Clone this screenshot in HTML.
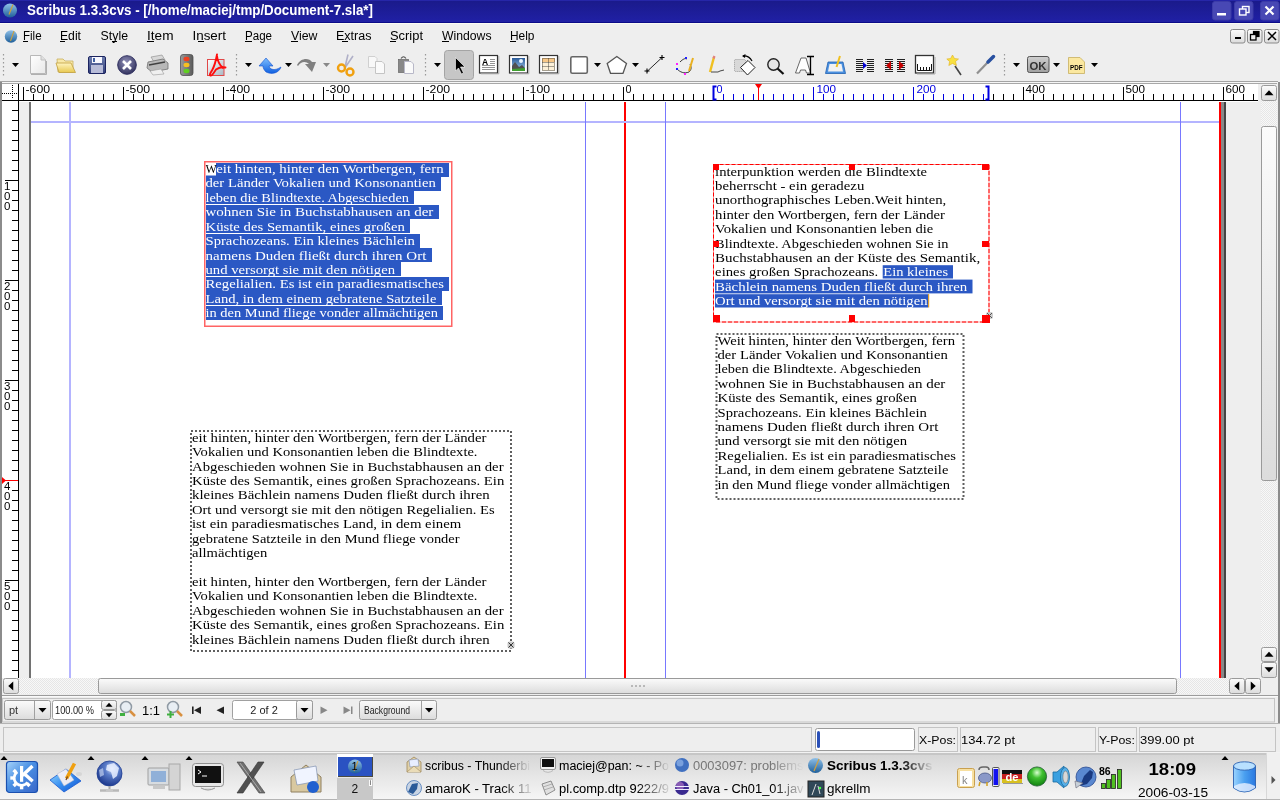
<!DOCTYPE html><html><head><meta charset="utf-8"><title>Scribus</title><style>html,body{margin:0;padding:0;width:1280px;height:800px;overflow:hidden;background:#eee;font-family:"Liberation Sans",sans-serif}svg{display:block;will-change:transform}text{white-space:pre}</style></head><body><svg width="1280" height="800" viewBox="0 0 1280 800"><defs>
<linearGradient id="gTitle" x1="0" y1="0" x2="0" y2="1"><stop offset="0" stop-color="#1a1a8a"/><stop offset="1" stop-color="#2020a6"/></linearGradient>
<linearGradient id="gBtn" x1="0" y1="0" x2="0" y2="1"><stop offset="0" stop-color="#fbfbfb"/><stop offset="1" stop-color="#dcdcdc"/></linearGradient>
<linearGradient id="gTask" x1="0" y1="0" x2="0" y2="1"><stop offset="0" stop-color="#d4d4d4"/><stop offset="0.5" stop-color="#e6e6e6"/><stop offset="1" stop-color="#f6f6f6"/></linearGradient>
<pattern id="chk" width="2" height="2" patternUnits="userSpaceOnUse"><rect width="2" height="2" fill="#f8f8f8"/><rect width="1" height="1" fill="#e6e6e6"/><rect x="1" y="1" width="1" height="1" fill="#e6e6e6"/></pattern>
<linearGradient id="gBall" x1="0" y1="0" x2="0" y2="1"><stop offset="0" stop-color="#8fc0e8"/><stop offset="1" stop-color="#1f5f9a"/></linearGradient>
</defs>
<rect x="0" y="0" width="1280" height="800" fill="#eeeeee" />
<rect x="0" y="0" width="1280" height="23" fill="url(#gTitle)" />
<rect x="0" y="0" width="1280" height="1" fill="#2626a8" />
<rect x="0" y="22" width="1280" height="1" fill="#0c0c88" />
<rect x="0" y="23" width="1280" height="1" fill="#fafaf2" />
<text x="27" y="15.3" font-family="Liberation Sans" font-size="14" font-weight="700" fill="#ffffff" textLength="346" lengthAdjust="spacingAndGlyphs" >Scribus 1.3.3cvs - [/home/maciej/tmp/Document-7.sla*]</text>
<rect x="1212.5" y="1.5" width="18.5" height="18.5" rx="2.5" fill="#4848b4" stroke="#3c3ca8"/>
<rect x="1234.5" y="1.5" width="18.5" height="18.5" rx="2.5" fill="#4848b4" stroke="#3c3ca8"/>
<rect x="1260.5" y="1.5" width="18.5" height="18.5" rx="2.5" fill="#4848b4" stroke="#3c3ca8"/>
<rect x="1217" y="13" width="9" height="2.5" fill="#fff" />
<rect x="1242.5" y="6.5" width="6.5" height="6" fill="none" stroke="#fff" stroke-width="1.4"/>
<rect x="1239.5" y="9" width="6.5" height="6" fill="#4848b4" stroke="#fff" stroke-width="1.4"/>
<path d="M1265.5 6.5 L1273.5 14.5 M1273.5 6.5 L1265.5 14.5" stroke="#fff" stroke-width="2.2"/>
<circle cx="10" cy="10.5" r="7" fill="url(#gBall)"/><path d="M13 4.5 L9 14.5" stroke="#c8a040" stroke-width="1.2"/>
<circle cx="11" cy="36.5" r="6.2" fill="url(#gBall)"/><path d="M14 31 L10.5 41" stroke="#c8a040" stroke-width="1.1"/>
<text x="23" y="39.8" font-family="Liberation Sans" font-size="12.3" font-weight="400" fill="#000" textLength="18.6" lengthAdjust="spacingAndGlyphs" >File</text>
<rect x="23" y="41" width="5" height="1" fill="#000" />
<text x="60" y="39.8" font-family="Liberation Sans" font-size="12.3" font-weight="400" fill="#000" textLength="21" lengthAdjust="spacingAndGlyphs" >Edit</text>
<rect x="60" y="41" width="5" height="1" fill="#000" />
<text x="100.6" y="39.8" font-family="Liberation Sans" font-size="12.3" font-weight="400" fill="#000" textLength="27.4" lengthAdjust="spacingAndGlyphs" >Style</text>
<rect x="112" y="41" width="5" height="1" fill="#000" />
<text x="147" y="39.8" font-family="Liberation Sans" font-size="12.3" font-weight="400" fill="#000" textLength="26.5" lengthAdjust="spacingAndGlyphs" >Item</text>
<rect x="147" y="41" width="7" height="1" fill="#000" />
<text x="192.5" y="39.8" font-family="Liberation Sans" font-size="12.3" font-weight="400" fill="#000" textLength="33.5" lengthAdjust="spacingAndGlyphs" >Insert</text>
<rect x="198" y="41" width="6" height="1" fill="#000" />
<text x="245" y="39.8" font-family="Liberation Sans" font-size="12.3" font-weight="400" fill="#000" textLength="27" lengthAdjust="spacingAndGlyphs" >Page</text>
<rect x="245" y="41" width="7" height="1" fill="#000" />
<text x="291" y="39.8" font-family="Liberation Sans" font-size="12.3" font-weight="400" fill="#000" textLength="26.5" lengthAdjust="spacingAndGlyphs" >View</text>
<rect x="291" y="41" width="7" height="1" fill="#000" />
<text x="336" y="39.8" font-family="Liberation Sans" font-size="12.3" font-weight="400" fill="#000" textLength="35.5" lengthAdjust="spacingAndGlyphs" >Extras</text>
<rect x="342" y="41" width="6" height="1" fill="#000" />
<text x="390" y="39.8" font-family="Liberation Sans" font-size="12.3" font-weight="400" fill="#000" textLength="33" lengthAdjust="spacingAndGlyphs" >Script</text>
<rect x="390" y="41" width="6" height="1" fill="#000" />
<text x="442" y="39.8" font-family="Liberation Sans" font-size="12.3" font-weight="400" fill="#000" textLength="49.5" lengthAdjust="spacingAndGlyphs" >Windows</text>
<rect x="442" y="41" width="7" height="1" fill="#000" />
<text x="510" y="39.8" font-family="Liberation Sans" font-size="12.3" font-weight="400" fill="#000" textLength="24.5" lengthAdjust="spacingAndGlyphs" >Help</text>
<rect x="510" y="41" width="6" height="1" fill="#000" />
<rect x="1230.5" y="29.5" width="14.5" height="13.5" rx="2" fill="url(#gBtn)" stroke="#8a8a8a"/>
<rect x="1247.5" y="29.5" width="14.5" height="13.5" rx="2" fill="url(#gBtn)" stroke="#8a8a8a"/>
<rect x="1264.5" y="29.5" width="14.5" height="13.5" rx="2" fill="url(#gBtn)" stroke="#8a8a8a"/>
<rect x="1235" y="37" width="6" height="2" fill="#000" />
<rect x="1253.5" y="31.5" width="5.5" height="5" fill="#000" stroke="#000" stroke-width="1.2"/><rect x="1250.5" y="34.5" width="5.5" height="5.5" fill="#f0f0f0" stroke="#000" stroke-width="1.3"/>
<path d="M1268 32 L1276 40 M1276 32 L1268 40" stroke="#000" stroke-width="1.5"/>
<rect x="0" y="81" width="1278" height="1" fill="#a4a4a4" />
<rect x="0" y="82" width="1280" height="1" fill="#f6f6f6" />
<rect x="2" y="83" width="1275" height="1" fill="#a8a8a8" />
<defs>
<linearGradient id="gDoc" x1="0" y1="0" x2="1" y2="1"><stop offset="0" stop-color="#ffffff"/><stop offset="1" stop-color="#e8e8e8"/></linearGradient>
<linearGradient id="gFold" x1="0" y1="0" x2="0" y2="1"><stop offset="0" stop-color="#fff4c0"/><stop offset="1" stop-color="#e8c850"/></linearGradient>
<linearGradient id="gSave" x1="0" y1="0" x2="0" y2="1"><stop offset="0" stop-color="#7080b0"/><stop offset="1" stop-color="#303c78"/></linearGradient>
<radialGradient id="gClose" cx="0.45" cy="0.35" r="0.7"><stop offset="0" stop-color="#9090b8"/><stop offset="1" stop-color="#2c2c58"/></radialGradient>
<linearGradient id="gTL" x1="0" y1="0" x2="1" y2="0"><stop offset="0" stop-color="#9a9a9a"/><stop offset="0.5" stop-color="#7a7a7a"/><stop offset="1" stop-color="#5a5a5a"/></linearGradient>
<linearGradient id="gBlue" x1="0" y1="0" x2="0" y2="1"><stop offset="0" stop-color="#80c0ff"/><stop offset="1" stop-color="#1060e0"/></linearGradient>
<linearGradient id="gSky" x1="0" y1="0" x2="0" y2="1"><stop offset="0" stop-color="#2a5a98"/><stop offset="1" stop-color="#a8d0f0"/></linearGradient>
<linearGradient id="gOK" x1="0" y1="0" x2="0" y2="1"><stop offset="0" stop-color="#d0d0d0"/><stop offset="1" stop-color="#a0a0a0"/></linearGradient>
</defs>
<path d="M3.5 54 V77" stroke="#999" stroke-width="1.2" stroke-dasharray="1.5 2.5"/>
<path d="M12 63 H19 L15.5 67 Z" fill="#000"/>
<path d="M30.5 55.5 H41 L45.5 60 V73.5 H30.5 Z" fill="url(#gDoc)" stroke="#b8b8b8"/><path d="M41 55.5 V60 H45.5" fill="#e0e0e0" stroke="#c0c0c0"/><path d="M31 74.5 H46.5 V61" stroke="#b0b0b0" fill="none"/>
<path d="M57 59 H63 L65 61 H73 V72 H58 Z" fill="#f8e8a8" stroke="#c8b060" stroke-width="0.8"/><path d="M56 63 H71 L75.5 72.5 H59 Z" fill="url(#gFold)" stroke="#c0a040" stroke-width="0.8"/>
<rect x="88.5" y="56.5" width="17" height="17" rx="1.5" fill="url(#gSave)" stroke="#1c2460"/><rect x="92" y="57" width="10" height="6" fill="#f8f8ff"/><rect x="91" y="65" width="12" height="8" fill="#b8bcd8"/><rect x="93" y="58" width="2" height="4" fill="#4060a0"/>
<circle cx="127" cy="65" r="9.3" fill="url(#gClose)" stroke="#303060"/><path d="M123 61 L131 69 M131 61 L123 69" stroke="#fff" stroke-width="2.6"/>
<path d="M151 57 L162 55 L165 60 L154 62 Z" fill="#d8d8d8" stroke="#888" stroke-width="0.6"/><path d="M148 62 L163 59 L168 63 L168 69 L152 72 L147 68 Z" fill="#b8b8b8" stroke="#707070" stroke-width="0.8"/><path d="M149 65 L165 62" stroke="#404040" stroke-width="1.5"/><path d="M150 71 L161 69 L164 74 L153 75 Z" fill="#f0f0f0" stroke="#999" stroke-width="0.6"/>
<rect x="180.5" y="54.5" width="12.5" height="21" rx="2.5" fill="url(#gTL)" stroke="#505050" stroke-width="0.8"/><ellipse cx="186.5" cy="59" rx="3" ry="2.2" fill="#f04020"/><ellipse cx="186.5" cy="65" rx="3" ry="2.2" fill="#f8c020"/><ellipse cx="186.5" cy="71" rx="3" ry="2.2" fill="#60d020"/>
<defs><linearGradient id="gPdf" x1="0" y1="0" x2="1" y2="1"><stop offset="0" stop-color="#ffffff"/><stop offset="1" stop-color="#a8b8c4"/></linearGradient></defs>
<rect x="207.5" y="59.5" width="16.5" height="16" fill="url(#gPdf)" stroke="#e04848"/>
<path d="M217 54.5 C216 60 215 65 212.5 69.5 C210.5 73 209 75 210.5 75.5 C212 76 214 72.5 216 69.5 C219 67.5 222.5 67 225.5 67.5 M217 56 C217.5 61 219.5 65 223 68" fill="none" stroke="#ff0c0c" stroke-width="1.9" stroke-linecap="round"/>
<path d="M236.5 54 V77" stroke="#999" stroke-width="1.2" stroke-dasharray="1.5 2.5"/>
<path d="M245 63 H252 L248.5 67 Z" fill="#000"/>
<path d="M259 66 L266 58 L273 66 L269 66 C270 70 275 71 281 67 C279 73 272 75 266 72 C264 70 263 68 263 66 Z" fill="url(#gBlue)" stroke="#1050d0" stroke-width="0.6"/>
<path d="M285 63 H292 L288.5 67 Z" fill="#000"/>
<path d="M297 65 C300 58 309 57 312 62 L316 62 L312 72 L305 64 L309 64 C306 61 301 61 298 66 Z" fill="#808080"/>
<path d="M323 63 H330 L326.5 67 Z" fill="#888"/>
<path d="M348 54.5 L345 67 M353 56 L345.5 67" stroke="#b0b0c8" stroke-width="1.6"/><circle cx="341.5" cy="68" r="3.5" fill="none" stroke="#f0a010" stroke-width="2.4"/><circle cx="350" cy="72" r="3.5" fill="none" stroke="#f0a010" stroke-width="2.4"/>
<path d="M368.5 56.5 H375 L377 58.5 V67.5 H368.5 Z" fill="#f8f8f8" stroke="#d0d0d0"/><path d="M375.5 61.5 H382 L384.5 64 V73.5 H375.5 Z" fill="#fafafa" stroke="#c4c4c4"/>
<rect x="398.5" y="59.5" width="10" height="13" fill="#888" stroke="#666" stroke-width="0.7"/><path d="M401 58.5 Q403.5 55 406 58.5" fill="none" stroke="#555" stroke-width="1.2"/><path d="M404.5 61.5 H411 L413.5 64 V73.5 H404.5 Z" fill="#fafafa" stroke="#b8b8c8"/>
<path d="M425.5 54 V77" stroke="#999" stroke-width="1.2" stroke-dasharray="1.5 2.5"/>
<path d="M434 63 H441 L437.5 67 Z" fill="#000"/>
<rect x="444.5" y="50.5" width="29" height="29" rx="3" fill="#c6c6c6" stroke="#a4a4a4"/>
<path d="M455.5 57.5 V71 L458.5 68 L461.5 74 L463.5 73 L460.5 67 L465 67 Z" fill="#000" stroke="#fff" stroke-width="0.6"/>
<rect x="479.5" y="55.5" width="18" height="17.5" fill="#fff" stroke="#333" stroke-width="1.2"/><path d="M481 73.8 H498.8 V56" stroke="#aaa" fill="none"/>
<text x="482" y="64.5" font-family="Liberation Sans" font-size="8.5" font-weight="700" fill="#000" >A</text>
<path d="M490 59.5 H495 M490 61.5 H495 M490 63.5 H495 M482 65.5 H495 M482 67.5 H495 M482 69.5 H495" stroke="#777" stroke-width="0.8"/>
<rect x="509.5" y="55.5" width="18" height="17.5" fill="#fff" stroke="#333" stroke-width="1.2"/><path d="M511 73.8 H528.8 V56" stroke="#aaa" fill="none"/>
<rect x="512" y="58" width="13" height="13" fill="url(#gSky)"/><path d="M512 71 V66 L515 62 L519 67 L522 65 L525 68 V71 Z" fill="#505050"/><path d="M512 71 V69 L525 68 V71 Z" fill="#40a030"/><circle cx="521" cy="61" r="2" fill="#e8f4ff"/>
<rect x="539.5" y="55.5" width="18" height="17.5" fill="#fff" stroke="#333" stroke-width="1.2"/><path d="M541 73.8 H558.8 V56" stroke="#aaa" fill="none"/>
<rect x="542" y="58" width="13" height="13" fill="#fcf0d8"/><rect x="542" y="58" width="13" height="4" fill="#f8c888"/><path d="M542.5 58.5 H554.5 V70.5 H542.5 Z M542.5 62.5 H554.5 M542.5 66.5 H554.5 M548.5 58.5 V70.5" fill="none" stroke="#222" stroke-width="0.8" stroke-dasharray="1 1"/>
<rect x="570.8" y="56.8" width="16.5" height="16.5" rx="1.5" fill="#fff" stroke="#666" stroke-width="1.6"/>
<path d="M594 63 H601 L597.5 67 Z" fill="#000"/>
<path d="M616.8 56.5 L626.5 63.5 L623 73.3 H610.5 L607.2 63.5 Z" fill="#fff" stroke="#555" stroke-width="1.3"/>
<path d="M632 63 H639 L635.5 67 Z" fill="#000"/>
<path d="M647 71.5 L662 57.5" stroke="#111" stroke-width="0.9"/><path d="M644.5 71 H649.5 M647 68.5 V73.5 M659.5 57.5 H664.5 M662 55 V60" stroke="#000" stroke-width="1.1"/>
<path d="M680 62 C683 59 685 58 687 59 M677 69 C680 72 684 74 689 72 C691 70 692 68 690 64" fill="none" stroke="#222" stroke-width="0.9"/><path d="M689 71 L693 58" stroke="#e8b020" stroke-width="2"/><rect x="676" y="63" width="2" height="2" fill="#ff20ff"/><rect x="676" y="68" width="2" height="2" fill="#2020ff"/><rect x="685" y="57" width="2" height="2" fill="#2020ff"/><rect x="684" y="73" width="2" height="2" fill="#ff20ff"/>
<path d="M710 72 L714 57" stroke="#f0c020" stroke-width="2.4"/><path d="M713.5 58.5 L714.5 56" stroke="#e08080" stroke-width="2.2"/><path d="M711 72 H718 L720 71 L724 70" fill="none" stroke="#333" stroke-width="0.9"/>
<rect x="734.5" y="59.5" width="11" height="12" rx="1" fill="#d8d8d8" stroke="#999" stroke-dasharray="1 1"/><path d="M748 60.5 L755 67.5 L747.5 75 L740.5 67.5 Z" fill="#fff" stroke="#222" stroke-width="1"/><path d="M743 56 Q749 55.5 752 61" fill="none" stroke="#000" stroke-width="1.2"/><path d="M742 56 L745.5 54 L745 58 Z" fill="#000"/>
<circle cx="773.5" cy="64.5" r="5.7" fill="#e4e4e4" stroke="#222" stroke-width="1.4"/><path d="M777.5 68.5 L783.5 74" stroke="#111" stroke-width="2.2"/>
<path d="M795.5 73 L801 58 H806 L810.5 73 H806.5 L805.5 70 H800.5 L799.5 73 Z" fill="#fff" stroke="#444" stroke-width="0.8"/><path d="M807 56.5 H814 M807 74.5 H814 M810.5 56.5 V74.5" stroke="#000" stroke-width="1.3"/>
<path d="M828 62 H843 L845.5 73.5 H825.5 Z" fill="#4a90e0" stroke="#2060b0" stroke-width="0.8"/><path d="M829.5 64 H841.5 L843 71.5 H828 Z" fill="#f2f2f2"/><path d="M836.5 67 L840 56" stroke="#f0c020" stroke-width="2"/>
<path d="M856 59.5 H863 M867 59.5 H874 M856 61.5 H863 M867 61.5 H874 M856 63.5 H863 M867 63.5 H874 M856 65.5 H863 M867 65.5 H874 M856 67.5 H863 M867 67.5 H874 M856 69.5 H863 M867 69.5 H874 M856 71.5 H863 M867 71.5 H874 " stroke="#222" stroke-width="1"/><path d="M863 62 L867 65.5 L863 69 Z" fill="#0000d0"/>
<path d="M885 59.5 H893 M897 59.5 H905 M885 61.5 H893 M897 61.5 H905 M885 63.5 H893 M897 63.5 H905 M885 65.5 H893 M897 65.5 H905 M885 67.5 H893 M897 67.5 H905 M885 69.5 H893 M897 69.5 H905 M885 71.5 H893 M897 71.5 H905 " stroke="#222" stroke-width="1"/><path d="M891 61 L886 65.5 L891 70 Z M899 61 L904 65.5 L899 70 Z" fill="#c80000"/>
<rect x="915.5" y="55.5" width="18" height="17.5" fill="#fff" stroke="#333" stroke-width="1.3"/><path d="M917 74 H935 V57" stroke="#aaa" fill="none"/><path d="M917.5 64 V70.5 H931.5 V64 M920.5 67 V70.5 M923.5 67 V70.5 M926.5 67 V70.5 M929.5 67 V70.5" fill="none" stroke="#111" stroke-width="1"/>
<path d="M955 66 L961 75" stroke="#444" stroke-width="1.6"/><path d="M952.5 55 L954.5 58.5 L958.5 59 L955.5 61.5 L956.5 65.5 L952.5 63.5 L948.8 65.5 L949.6 61.5 L946.8 59 L950.6 58.5 Z" fill="#f8e040" stroke="#e0b020" stroke-width="0.6"/>
<path d="M977 73.5 L989 61" stroke="#909090" stroke-width="2.2"/><path d="M988 62 L993.5 56.5" stroke="#2850a0" stroke-width="3.5" stroke-linecap="round"/>
<path d="M1004.5 54 V77" stroke="#999" stroke-width="1.2" stroke-dasharray="1.5 2.5"/>
<path d="M1013 63 H1020 L1016.5 67 Z" fill="#000"/>
<rect x="1027.5" y="56.5" width="21.5" height="16" rx="2" fill="url(#gOK)" stroke="#555" stroke-width="1"/>
<text x="1029.5" y="69.5" font-family="Liberation Sans" font-size="11.5" font-weight="700" fill="#333" textLength="17" lengthAdjust="spacingAndGlyphs" >OK</text>
<path d="M1053 63 H1060 L1056.5 67 Z" fill="#000"/>
<path d="M1068.5 57.5 H1080 L1084.5 62 V73.5 H1068.5 Z" fill="#fbe8a0" stroke="#c8b060" stroke-width="0.8"/>
<text x="1070" y="70" font-family="Liberation Sans" font-size="6.5" font-weight="700" fill="#000" textLength="12.5" lengthAdjust="spacingAndGlyphs" >PDF</text>
<path d="M1091 63 H1098 L1094.5 67 Z" fill="#000"/>
<rect x="0" y="82" width="2" height="613" fill="#8c8c8c" />
<rect x="2" y="84" width="16" height="16" fill="#ffffff" />
<path d="M2 93.5 H17 M12.5 85 V98" stroke="#000" stroke-width="1" stroke-dasharray="1 1"/>
<rect x="19" y="84" width="1239" height="16" fill="#ffffff" />
<rect x="18" y="84" width="1" height="594" fill="#000" />
<rect x="2" y="100" width="1256" height="1" fill="#000" />
<rect x="23" y="87" width="1" height="13" fill="#000"/><rect x="33" y="94" width="1" height="6" fill="#000"/><rect x="43" y="94" width="1" height="6" fill="#000"/><rect x="53" y="94" width="1" height="6" fill="#000"/><rect x="63" y="94" width="1" height="6" fill="#000"/><rect x="73" y="94" width="1" height="6" fill="#000"/><rect x="83" y="94" width="1" height="6" fill="#000"/><rect x="93" y="94" width="1" height="6" fill="#000"/><rect x="103" y="94" width="1" height="6" fill="#000"/><rect x="113" y="94" width="1" height="6" fill="#000"/><rect x="123" y="87" width="1" height="13" fill="#000"/><rect x="133" y="94" width="1" height="6" fill="#000"/><rect x="143" y="94" width="1" height="6" fill="#000"/><rect x="153" y="94" width="1" height="6" fill="#000"/><rect x="163" y="94" width="1" height="6" fill="#000"/><rect x="173" y="94" width="1" height="6" fill="#000"/><rect x="183" y="94" width="1" height="6" fill="#000"/><rect x="193" y="94" width="1" height="6" fill="#000"/><rect x="203" y="94" width="1" height="6" fill="#000"/><rect x="213" y="94" width="1" height="6" fill="#000"/><rect x="223" y="87" width="1" height="13" fill="#000"/><rect x="233" y="94" width="1" height="6" fill="#000"/><rect x="243" y="94" width="1" height="6" fill="#000"/><rect x="253" y="94" width="1" height="6" fill="#000"/><rect x="263" y="94" width="1" height="6" fill="#000"/><rect x="273" y="94" width="1" height="6" fill="#000"/><rect x="283" y="94" width="1" height="6" fill="#000"/><rect x="293" y="94" width="1" height="6" fill="#000"/><rect x="303" y="94" width="1" height="6" fill="#000"/><rect x="313" y="94" width="1" height="6" fill="#000"/><rect x="323" y="87" width="1" height="13" fill="#000"/><rect x="333" y="94" width="1" height="6" fill="#000"/><rect x="343" y="94" width="1" height="6" fill="#000"/><rect x="353" y="94" width="1" height="6" fill="#000"/><rect x="363" y="94" width="1" height="6" fill="#000"/><rect x="373" y="94" width="1" height="6" fill="#000"/><rect x="383" y="94" width="1" height="6" fill="#000"/><rect x="393" y="94" width="1" height="6" fill="#000"/><rect x="403" y="94" width="1" height="6" fill="#000"/><rect x="413" y="94" width="1" height="6" fill="#000"/><rect x="423" y="87" width="1" height="13" fill="#000"/><rect x="433" y="94" width="1" height="6" fill="#000"/><rect x="443" y="94" width="1" height="6" fill="#000"/><rect x="453" y="94" width="1" height="6" fill="#000"/><rect x="463" y="94" width="1" height="6" fill="#000"/><rect x="473" y="94" width="1" height="6" fill="#000"/><rect x="483" y="94" width="1" height="6" fill="#000"/><rect x="493" y="94" width="1" height="6" fill="#000"/><rect x="503" y="94" width="1" height="6" fill="#000"/><rect x="513" y="94" width="1" height="6" fill="#000"/><rect x="523" y="87" width="1" height="13" fill="#000"/><rect x="533" y="94" width="1" height="6" fill="#000"/><rect x="543" y="94" width="1" height="6" fill="#000"/><rect x="553" y="94" width="1" height="6" fill="#000"/><rect x="563" y="94" width="1" height="6" fill="#000"/><rect x="573" y="94" width="1" height="6" fill="#000"/><rect x="583" y="94" width="1" height="6" fill="#000"/><rect x="593" y="94" width="1" height="6" fill="#000"/><rect x="603" y="94" width="1" height="6" fill="#000"/><rect x="613" y="94" width="1" height="6" fill="#000"/><rect x="623" y="87" width="1" height="13" fill="#000"/><rect x="633" y="94" width="1" height="6" fill="#000"/><rect x="643" y="94" width="1" height="6" fill="#000"/><rect x="653" y="94" width="1" height="6" fill="#000"/><rect x="663" y="94" width="1" height="6" fill="#000"/><rect x="673" y="94" width="1" height="6" fill="#000"/><rect x="683" y="94" width="1" height="6" fill="#000"/><rect x="693" y="94" width="1" height="6" fill="#000"/><rect x="703" y="94" width="1" height="6" fill="#000"/><rect x="713" y="94" width="1" height="6" fill="#0000e0"/><rect x="723" y="94" width="1" height="6" fill="#0000e0"/><rect x="733" y="94" width="1" height="6" fill="#0000e0"/><rect x="743" y="94" width="1" height="6" fill="#0000e0"/><rect x="753" y="94" width="1" height="6" fill="#0000e0"/><rect x="763" y="94" width="1" height="6" fill="#0000e0"/><rect x="773" y="94" width="1" height="6" fill="#0000e0"/><rect x="783" y="94" width="1" height="6" fill="#0000e0"/><rect x="793" y="94" width="1" height="6" fill="#0000e0"/><rect x="803" y="94" width="1" height="6" fill="#0000e0"/><rect x="813" y="87" width="1" height="13" fill="#0000e0"/><rect x="823" y="94" width="1" height="6" fill="#0000e0"/><rect x="833" y="94" width="1" height="6" fill="#0000e0"/><rect x="843" y="94" width="1" height="6" fill="#0000e0"/><rect x="853" y="94" width="1" height="6" fill="#0000e0"/><rect x="863" y="94" width="1" height="6" fill="#0000e0"/><rect x="873" y="94" width="1" height="6" fill="#0000e0"/><rect x="883" y="94" width="1" height="6" fill="#0000e0"/><rect x="893" y="94" width="1" height="6" fill="#0000e0"/><rect x="903" y="94" width="1" height="6" fill="#0000e0"/><rect x="913" y="87" width="1" height="13" fill="#0000e0"/><rect x="923" y="94" width="1" height="6" fill="#0000e0"/><rect x="933" y="94" width="1" height="6" fill="#0000e0"/><rect x="943" y="94" width="1" height="6" fill="#0000e0"/><rect x="953" y="94" width="1" height="6" fill="#0000e0"/><rect x="963" y="94" width="1" height="6" fill="#0000e0"/><rect x="973" y="94" width="1" height="6" fill="#0000e0"/><rect x="983" y="94" width="1" height="6" fill="#0000e0"/><rect x="993" y="94" width="1" height="6" fill="#000"/><rect x="1003" y="94" width="1" height="6" fill="#000"/><rect x="1013" y="94" width="1" height="6" fill="#000"/><rect x="1023" y="87" width="1" height="13" fill="#000"/><rect x="1033" y="94" width="1" height="6" fill="#000"/><rect x="1043" y="94" width="1" height="6" fill="#000"/><rect x="1053" y="94" width="1" height="6" fill="#000"/><rect x="1063" y="94" width="1" height="6" fill="#000"/><rect x="1073" y="94" width="1" height="6" fill="#000"/><rect x="1083" y="94" width="1" height="6" fill="#000"/><rect x="1093" y="94" width="1" height="6" fill="#000"/><rect x="1103" y="94" width="1" height="6" fill="#000"/><rect x="1113" y="94" width="1" height="6" fill="#000"/><rect x="1123" y="87" width="1" height="13" fill="#000"/><rect x="1133" y="94" width="1" height="6" fill="#000"/><rect x="1143" y="94" width="1" height="6" fill="#000"/><rect x="1153" y="94" width="1" height="6" fill="#000"/><rect x="1163" y="94" width="1" height="6" fill="#000"/><rect x="1173" y="94" width="1" height="6" fill="#000"/><rect x="1183" y="94" width="1" height="6" fill="#000"/><rect x="1193" y="94" width="1" height="6" fill="#000"/><rect x="1203" y="94" width="1" height="6" fill="#000"/><rect x="1213" y="94" width="1" height="6" fill="#000"/><rect x="1223" y="87" width="1" height="13" fill="#000"/><rect x="1233" y="94" width="1" height="6" fill="#000"/><rect x="1243" y="94" width="1" height="6" fill="#000"/><rect x="1253" y="94" width="1" height="6" fill="#000"/>
<text x="25.5" y="93" font-family="Liberation Sans" font-size="11.5" font-weight="400" fill="#000" textLength="24.5" lengthAdjust="spacingAndGlyphs" >-600</text>
<text x="125.5" y="93" font-family="Liberation Sans" font-size="11.5" font-weight="400" fill="#000" textLength="24.5" lengthAdjust="spacingAndGlyphs" >-500</text>
<text x="225.5" y="93" font-family="Liberation Sans" font-size="11.5" font-weight="400" fill="#000" textLength="24.5" lengthAdjust="spacingAndGlyphs" >-400</text>
<text x="325.5" y="93" font-family="Liberation Sans" font-size="11.5" font-weight="400" fill="#000" textLength="24.5" lengthAdjust="spacingAndGlyphs" >-300</text>
<text x="425.5" y="93" font-family="Liberation Sans" font-size="11.5" font-weight="400" fill="#000" textLength="24.5" lengthAdjust="spacingAndGlyphs" >-200</text>
<text x="525.5" y="93" font-family="Liberation Sans" font-size="11.5" font-weight="400" fill="#000" textLength="24.5" lengthAdjust="spacingAndGlyphs" >-100</text>
<text x="625.5" y="93" font-family="Liberation Sans" font-size="11.5" font-weight="400" fill="#000" textLength="6" lengthAdjust="spacingAndGlyphs" >0</text>
<text x="1025.5" y="93" font-family="Liberation Sans" font-size="11.5" font-weight="400" fill="#000" textLength="19.5" lengthAdjust="spacingAndGlyphs" >400</text>
<text x="1125.5" y="93" font-family="Liberation Sans" font-size="11.5" font-weight="400" fill="#000" textLength="19.5" lengthAdjust="spacingAndGlyphs" >500</text>
<text x="1225.5" y="93" font-family="Liberation Sans" font-size="11.5" font-weight="400" fill="#000" textLength="19.5" lengthAdjust="spacingAndGlyphs" >600</text>
<text x="716.5" y="93" font-family="Liberation Sans" font-size="11.5" font-weight="400" fill="#0000e0" textLength="6" lengthAdjust="spacingAndGlyphs" >0</text>
<text x="816.5" y="93" font-family="Liberation Sans" font-size="11.5" font-weight="400" fill="#0000e0" textLength="19.5" lengthAdjust="spacingAndGlyphs" >100</text>
<text x="916.5" y="93" font-family="Liberation Sans" font-size="11.5" font-weight="400" fill="#0000e0" textLength="19.5" lengthAdjust="spacingAndGlyphs" >200</text>
<path d="M716.5 86.5 H713.5 V99.5 H716.5" fill="none" stroke="#0000e0" stroke-width="2"/>
<path d="M985.5 86.5 H988.5 V99.5 H985.5" fill="none" stroke="#0000e0" stroke-width="2"/>
<rect x="758" y="86" width="1" height="14" fill="#ff0000" />
<path d="M755 84 H762 L758.5 89 Z" fill="#ff0000"/>
<rect x="2" y="101" width="16" height="577" fill="#ffffff" />
<rect x="12" y="110" width="6" height="1" fill="#000"/><rect x="12" y="120" width="6" height="1" fill="#000"/><rect x="12" y="130" width="6" height="1" fill="#000"/><rect x="12" y="140" width="6" height="1" fill="#000"/><rect x="12" y="150" width="6" height="1" fill="#000"/><rect x="12" y="160" width="6" height="1" fill="#000"/><rect x="12" y="170" width="6" height="1" fill="#000"/><rect x="5" y="180" width="13" height="1" fill="#000"/><rect x="12" y="190" width="6" height="1" fill="#000"/><rect x="12" y="200" width="6" height="1" fill="#000"/><rect x="12" y="210" width="6" height="1" fill="#000"/><rect x="12" y="220" width="6" height="1" fill="#000"/><rect x="12" y="230" width="6" height="1" fill="#000"/><rect x="12" y="240" width="6" height="1" fill="#000"/><rect x="12" y="250" width="6" height="1" fill="#000"/><rect x="12" y="260" width="6" height="1" fill="#000"/><rect x="12" y="270" width="6" height="1" fill="#000"/><rect x="5" y="280" width="13" height="1" fill="#000"/><rect x="12" y="290" width="6" height="1" fill="#000"/><rect x="12" y="300" width="6" height="1" fill="#000"/><rect x="12" y="310" width="6" height="1" fill="#000"/><rect x="12" y="320" width="6" height="1" fill="#000"/><rect x="12" y="330" width="6" height="1" fill="#000"/><rect x="12" y="340" width="6" height="1" fill="#000"/><rect x="12" y="350" width="6" height="1" fill="#000"/><rect x="12" y="360" width="6" height="1" fill="#000"/><rect x="12" y="370" width="6" height="1" fill="#000"/><rect x="5" y="380" width="13" height="1" fill="#000"/><rect x="12" y="390" width="6" height="1" fill="#000"/><rect x="12" y="400" width="6" height="1" fill="#000"/><rect x="12" y="410" width="6" height="1" fill="#000"/><rect x="12" y="420" width="6" height="1" fill="#000"/><rect x="12" y="430" width="6" height="1" fill="#000"/><rect x="12" y="440" width="6" height="1" fill="#000"/><rect x="12" y="450" width="6" height="1" fill="#000"/><rect x="12" y="460" width="6" height="1" fill="#000"/><rect x="12" y="470" width="6" height="1" fill="#000"/><rect x="5" y="480" width="13" height="1" fill="#000"/><rect x="12" y="490" width="6" height="1" fill="#000"/><rect x="12" y="500" width="6" height="1" fill="#000"/><rect x="12" y="510" width="6" height="1" fill="#000"/><rect x="12" y="520" width="6" height="1" fill="#000"/><rect x="12" y="530" width="6" height="1" fill="#000"/><rect x="12" y="540" width="6" height="1" fill="#000"/><rect x="12" y="550" width="6" height="1" fill="#000"/><rect x="12" y="560" width="6" height="1" fill="#000"/><rect x="12" y="570" width="6" height="1" fill="#000"/><rect x="5" y="580" width="13" height="1" fill="#000"/><rect x="12" y="590" width="6" height="1" fill="#000"/><rect x="12" y="600" width="6" height="1" fill="#000"/><rect x="12" y="610" width="6" height="1" fill="#000"/><rect x="12" y="620" width="6" height="1" fill="#000"/><rect x="12" y="630" width="6" height="1" fill="#000"/><rect x="12" y="640" width="6" height="1" fill="#000"/><rect x="12" y="650" width="6" height="1" fill="#000"/><rect x="12" y="660" width="6" height="1" fill="#000"/><rect x="12" y="670" width="6" height="1" fill="#000"/>
<text x="4" y="190" font-family="Liberation Sans" font-size="11.5" font-weight="400" fill="#000" >1</text>
<text x="4" y="200" font-family="Liberation Sans" font-size="11.5" font-weight="400" fill="#000" >0</text>
<text x="4" y="210" font-family="Liberation Sans" font-size="11.5" font-weight="400" fill="#000" >0</text>
<text x="4" y="290" font-family="Liberation Sans" font-size="11.5" font-weight="400" fill="#000" >2</text>
<text x="4" y="300" font-family="Liberation Sans" font-size="11.5" font-weight="400" fill="#000" >0</text>
<text x="4" y="310" font-family="Liberation Sans" font-size="11.5" font-weight="400" fill="#000" >0</text>
<text x="4" y="390" font-family="Liberation Sans" font-size="11.5" font-weight="400" fill="#000" >3</text>
<text x="4" y="400" font-family="Liberation Sans" font-size="11.5" font-weight="400" fill="#000" >0</text>
<text x="4" y="410" font-family="Liberation Sans" font-size="11.5" font-weight="400" fill="#000" >0</text>
<text x="4" y="490" font-family="Liberation Sans" font-size="11.5" font-weight="400" fill="#000" >4</text>
<text x="4" y="500" font-family="Liberation Sans" font-size="11.5" font-weight="400" fill="#000" >0</text>
<text x="4" y="510" font-family="Liberation Sans" font-size="11.5" font-weight="400" fill="#000" >0</text>
<text x="4" y="590" font-family="Liberation Sans" font-size="11.5" font-weight="400" fill="#000" >5</text>
<text x="4" y="600" font-family="Liberation Sans" font-size="11.5" font-weight="400" fill="#000" >0</text>
<text x="4" y="610" font-family="Liberation Sans" font-size="11.5" font-weight="400" fill="#000" >0</text>
<rect x="2" y="480" width="16" height="1" fill="#ff0000" />
<path d="M2 477 V484 L6 480.5 Z" fill="#ff0000"/>
<rect x="19" y="101" width="1241" height="577" fill="#eeeeee" />
<rect x="31" y="101" width="1188" height="577" fill="#ffffff" />
<rect x="29" y="101" width="2" height="577" fill="#727272" />
<rect x="1219" y="101" width="2" height="577" fill="#ff0000" />
<rect x="1221" y="101" width="3" height="577" fill="#888888" />
<rect x="1224" y="101" width="2" height="577" fill="#444444" />
<rect x="624" y="101" width="2" height="577" fill="#ff0000" />
<rect x="31" y="121" width="1188" height="2" fill="#b4b4ff" />
<rect x="585" y="101" width="1" height="577" fill="#7878ff" />
<rect x="665" y="101" width="1" height="577" fill="#7878ff" />
<rect x="1180" y="101" width="1" height="577" fill="#7878ff" />
<rect x="69" y="101" width="2" height="577" fill="#b4b4ff" />
<rect x="19" y="101" width="1239" height="1" fill="#ffffff" />
<rect x="206" y="163" width="242.5" height="14" fill="#2b58c4" shape-rendering="crispEdges"/>
<rect x="206" y="177" width="235.0" height="14" fill="#2b58c4" shape-rendering="crispEdges"/>
<rect x="206" y="191" width="208.0" height="13" fill="#2b58c4" shape-rendering="crispEdges"/>
<rect x="206" y="205" width="233.0" height="14" fill="#2b58c4" shape-rendering="crispEdges"/>
<rect x="206" y="219" width="204.0" height="14" fill="#2b58c4" shape-rendering="crispEdges"/>
<rect x="206" y="234" width="214.0" height="14" fill="#2b58c4" shape-rendering="crispEdges"/>
<rect x="206" y="248" width="226.0" height="14" fill="#2b58c4" shape-rendering="crispEdges"/>
<rect x="206" y="262" width="194.5" height="14" fill="#2b58c4" shape-rendering="crispEdges"/>
<rect x="206" y="277" width="243.0" height="14" fill="#2b58c4" shape-rendering="crispEdges"/>
<rect x="206" y="291" width="235.5" height="14" fill="#2b58c4" shape-rendering="crispEdges"/>
<rect x="206" y="306" width="237.0" height="14" fill="#2b58c4" shape-rendering="crispEdges"/>
<rect x="206" y="163" width="10" height="12.5" fill="#ffffff" />
<text x="205.5" y="173.0" font-family="Liberation Serif" font-size="13.2" font-weight="400" fill="#000" textLength="11.3" lengthAdjust="spacingAndGlyphs" >W</text>
<text x="216.2" y="173.0" font-family="Liberation Serif" font-size="13.2" font-weight="400" fill="#ffffff" textLength="227.4" lengthAdjust="spacingAndGlyphs" >eit hinten, hinter den Wortbergen, fern</text>
<text x="205.5" y="187.42" font-family="Liberation Serif" font-size="13.2" font-weight="400" fill="#ffffff" textLength="230.3" lengthAdjust="spacingAndGlyphs" >der Länder Vokalien und Konsonantien</text>
<text x="205.5" y="201.84" font-family="Liberation Serif" font-size="13.2" font-weight="400" fill="#ffffff" textLength="203.5" lengthAdjust="spacingAndGlyphs" >leben die Blindtexte. Abgeschieden</text>
<text x="205.5" y="216.26" font-family="Liberation Serif" font-size="13.2" font-weight="400" fill="#ffffff" textLength="227.8" lengthAdjust="spacingAndGlyphs" >wohnen Sie in Buchstabhausen an der</text>
<text x="205.5" y="230.68" font-family="Liberation Serif" font-size="13.2" font-weight="400" fill="#ffffff" textLength="199.3" lengthAdjust="spacingAndGlyphs" >Küste des Semantik, eines großen</text>
<text x="205.5" y="245.1" font-family="Liberation Serif" font-size="13.2" font-weight="400" fill="#ffffff" textLength="209.3" lengthAdjust="spacingAndGlyphs" >Sprachozeans. Ein kleines Bächlein</text>
<text x="205.5" y="259.52" font-family="Liberation Serif" font-size="13.2" font-weight="400" fill="#ffffff" textLength="220.8" lengthAdjust="spacingAndGlyphs" >namens Duden fließt durch ihren Ort</text>
<text x="205.5" y="273.94" font-family="Liberation Serif" font-size="13.2" font-weight="400" fill="#ffffff" textLength="189.6" lengthAdjust="spacingAndGlyphs" >und versorgt sie mit den nötigen</text>
<text x="205.5" y="288.36" font-family="Liberation Serif" font-size="13.2" font-weight="400" fill="#ffffff" textLength="238.4" lengthAdjust="spacingAndGlyphs" >Regelialien. Es ist ein paradiesmatisches</text>
<text x="205.5" y="302.78" font-family="Liberation Serif" font-size="13.2" font-weight="400" fill="#ffffff" textLength="230.9" lengthAdjust="spacingAndGlyphs" >Land, in dem einem gebratene Satzteile</text>
<text x="205.5" y="317.2" font-family="Liberation Serif" font-size="13.2" font-weight="400" fill="#ffffff" textLength="232.5" lengthAdjust="spacingAndGlyphs" >in den Mund fliege vonder allmächtigen</text>
<rect x="204.75" y="161.75" width="247" height="164.5" fill="none" stroke="#ff6464" stroke-width="1.5"/>
<text x="717.5" y="344.5" font-family="Liberation Serif" font-size="13.2" font-weight="400" fill="#000" textLength="237.6" lengthAdjust="spacingAndGlyphs" >Weit hinten, hinter den Wortbergen, fern</text>
<text x="717.5" y="358.92" font-family="Liberation Serif" font-size="13.2" font-weight="400" fill="#000" textLength="230.3" lengthAdjust="spacingAndGlyphs" >der Länder Vokalien und Konsonantien</text>
<text x="717.5" y="373.34" font-family="Liberation Serif" font-size="13.2" font-weight="400" fill="#000" textLength="203.5" lengthAdjust="spacingAndGlyphs" >leben die Blindtexte. Abgeschieden</text>
<text x="717.5" y="387.76" font-family="Liberation Serif" font-size="13.2" font-weight="400" fill="#000" textLength="227.8" lengthAdjust="spacingAndGlyphs" >wohnen Sie in Buchstabhausen an der</text>
<text x="717.5" y="402.18" font-family="Liberation Serif" font-size="13.2" font-weight="400" fill="#000" textLength="199.3" lengthAdjust="spacingAndGlyphs" >Küste des Semantik, eines großen</text>
<text x="717.5" y="416.6" font-family="Liberation Serif" font-size="13.2" font-weight="400" fill="#000" textLength="209.3" lengthAdjust="spacingAndGlyphs" >Sprachozeans. Ein kleines Bächlein</text>
<text x="717.5" y="431.02" font-family="Liberation Serif" font-size="13.2" font-weight="400" fill="#000" textLength="220.8" lengthAdjust="spacingAndGlyphs" >namens Duden fließt durch ihren Ort</text>
<text x="717.5" y="445.44" font-family="Liberation Serif" font-size="13.2" font-weight="400" fill="#000" textLength="189.6" lengthAdjust="spacingAndGlyphs" >und versorgt sie mit den nötigen</text>
<text x="717.5" y="459.86" font-family="Liberation Serif" font-size="13.2" font-weight="400" fill="#000" textLength="238.4" lengthAdjust="spacingAndGlyphs" >Regelialien. Es ist ein paradiesmatisches</text>
<text x="717.5" y="474.28" font-family="Liberation Serif" font-size="13.2" font-weight="400" fill="#000" textLength="230.9" lengthAdjust="spacingAndGlyphs" >Land, in dem einem gebratene Satzteile</text>
<text x="717.5" y="488.7" font-family="Liberation Serif" font-size="13.2" font-weight="400" fill="#000" textLength="232.5" lengthAdjust="spacingAndGlyphs" >in den Mund fliege vonder allmächtigen</text>
<rect x="716.5" y="334" width="247" height="165" fill="none" stroke="#606060" stroke-width="2" stroke-dasharray="2 2"/>
<text x="192.0" y="441.75" font-family="Liberation Serif" font-size="13.2" font-weight="400" fill="#000" textLength="294.5" lengthAdjust="spacingAndGlyphs" >eit hinten, hinter den Wortbergen, fern der Länder</text>
<text x="192.0" y="456.17" font-family="Liberation Serif" font-size="13.2" font-weight="400" fill="#000" textLength="285.5" lengthAdjust="spacingAndGlyphs" >Vokalien und Konsonantien leben die Blindtexte.</text>
<text x="192.0" y="470.59" font-family="Liberation Serif" font-size="13.2" font-weight="400" fill="#000" textLength="311.6" lengthAdjust="spacingAndGlyphs" >Abgeschieden wohnen Sie in Buchstabhausen an der</text>
<text x="192.0" y="485.01" font-family="Liberation Serif" font-size="13.2" font-weight="400" fill="#000" textLength="312.3" lengthAdjust="spacingAndGlyphs" >Küste des Semantik, eines großen Sprachozeans. Ein</text>
<text x="192.0" y="499.43" font-family="Liberation Serif" font-size="13.2" font-weight="400" fill="#000" textLength="297.7" lengthAdjust="spacingAndGlyphs" >kleines Bächlein namens Duden fließt durch ihren</text>
<text x="192.0" y="513.85" font-family="Liberation Serif" font-size="13.2" font-weight="400" fill="#000" textLength="302.6" lengthAdjust="spacingAndGlyphs" >Ort und versorgt sie mit den nötigen Regelialien. Es</text>
<text x="192.0" y="528.27" font-family="Liberation Serif" font-size="13.2" font-weight="400" fill="#000" textLength="269.3" lengthAdjust="spacingAndGlyphs" >ist ein paradiesmatisches Land, in dem einem</text>
<text x="192.0" y="542.69" font-family="Liberation Serif" font-size="13.2" font-weight="400" fill="#000" textLength="267.6" lengthAdjust="spacingAndGlyphs" >gebratene Satzteile in den Mund fliege vonder</text>
<text x="192.0" y="557.11" font-family="Liberation Serif" font-size="13.2" font-weight="400" fill="#000" textLength="75.3" lengthAdjust="spacingAndGlyphs" >allmächtigen</text>
<text x="192.0" y="585.95" font-family="Liberation Serif" font-size="13.2" font-weight="400" fill="#000" textLength="294.5" lengthAdjust="spacingAndGlyphs" >eit hinten, hinter den Wortbergen, fern der Länder</text>
<text x="192.0" y="600.37" font-family="Liberation Serif" font-size="13.2" font-weight="400" fill="#000" textLength="285.5" lengthAdjust="spacingAndGlyphs" >Vokalien und Konsonantien leben die Blindtexte.</text>
<text x="192.0" y="614.79" font-family="Liberation Serif" font-size="13.2" font-weight="400" fill="#000" textLength="311.6" lengthAdjust="spacingAndGlyphs" >Abgeschieden wohnen Sie in Buchstabhausen an der</text>
<text x="192.0" y="629.21" font-family="Liberation Serif" font-size="13.2" font-weight="400" fill="#000" textLength="312.3" lengthAdjust="spacingAndGlyphs" >Küste des Semantik, eines großen Sprachozeans. Ein</text>
<text x="192.0" y="643.63" font-family="Liberation Serif" font-size="13.2" font-weight="400" fill="#000" textLength="297.7" lengthAdjust="spacingAndGlyphs" >kleines Bächlein namens Duden fließt durch ihren</text>
<rect x="191" y="431" width="320" height="220" fill="none" stroke="#606060" stroke-width="2" stroke-dasharray="2 2"/>
<rect x="507.5" y="641.5" width="7" height="7" rx="2" fill="#c8c8c8"/><path d="M508.5 642.5 L513.5 647.5 M513.5 642.5 L508.5 647.5" stroke="#222" stroke-width="0.9"/>
<text x="715.1" y="175.5" font-family="Liberation Serif" font-size="13.2" font-weight="400" fill="#000" textLength="211.9" lengthAdjust="spacingAndGlyphs" >interpunktion werden die Blindtexte</text>
<text x="715.1" y="189.92" font-family="Liberation Serif" font-size="13.2" font-weight="400" fill="#000" textLength="149.2" lengthAdjust="spacingAndGlyphs" >beherrscht - ein geradezu</text>
<text x="715.1" y="204.34" font-family="Liberation Serif" font-size="13.2" font-weight="400" fill="#000" textLength="231.2" lengthAdjust="spacingAndGlyphs" >unorthographisches Leben.Weit hinten,</text>
<text x="715.1" y="218.76" font-family="Liberation Serif" font-size="13.2" font-weight="400" fill="#000" textLength="229.9" lengthAdjust="spacingAndGlyphs" >hinter den Wortbergen, fern der Länder</text>
<text x="715.1" y="233.18" font-family="Liberation Serif" font-size="13.2" font-weight="400" fill="#000" textLength="218.2" lengthAdjust="spacingAndGlyphs" >Vokalien und Konsonantien leben die</text>
<text x="715.1" y="247.6" font-family="Liberation Serif" font-size="13.2" font-weight="400" fill="#000" textLength="233.4" lengthAdjust="spacingAndGlyphs" >Blindtexte. Abgeschieden wohnen Sie in</text>
<text x="715.1" y="262.02" font-family="Liberation Serif" font-size="13.2" font-weight="400" fill="#000" textLength="265.1" lengthAdjust="spacingAndGlyphs" >Buchstabhausen an der Küste des Semantik,</text>
<rect x="882.7" y="265.2" width="70.3" height="13.3" fill="#2b58c4"/>
<text x="715.1" y="276.44" font-family="Liberation Serif" font-size="13.2" font-weight="400" fill="#000" textLength="163.2" lengthAdjust="spacingAndGlyphs" >eines großen Sprachozeans.</text>
<text x="883.3" y="276.44" font-family="Liberation Serif" font-size="13.2" font-weight="400" fill="#ffffff" textLength="64.8" lengthAdjust="spacingAndGlyphs" >Ein kleines</text>
<rect x="715" y="279.6" width="257.5" height="13.8" fill="#2b58c4"/>
<text x="715.1" y="290.86" font-family="Liberation Serif" font-size="13.2" font-weight="400" fill="#ffffff" textLength="252.2" lengthAdjust="spacingAndGlyphs" >Bächlein namens Duden fließt durch ihren</text>
<rect x="715" y="294.2" width="213" height="13.3" fill="#2b58c4"/>
<text x="715.1" y="305.28" font-family="Liberation Serif" font-size="13.2" font-weight="400" fill="#ffffff" textLength="212.4" lengthAdjust="spacingAndGlyphs" >Ort und versorgt sie mit den nötigen</text>
<rect x="928" y="294" width="1.2" height="13.5" fill="#e0a030" />
<rect x="713.5" y="164.5" width="275.5" height="157.5" fill="none" stroke="#ff9a9a" stroke-width="1"/>
<rect x="713.5" y="164.5" width="275.5" height="157.5" fill="none" stroke="#ff0000" stroke-width="1" stroke-dasharray="4 2"/>
<rect x="986" y="312" width="7" height="7" rx="2" fill="#c8c8c8" opacity="0.9"/><path d="M987 313 L992 318 M992 313 L987 318" stroke="#333" stroke-width="0.8"/>
<rect x="713" y="164" width="6" height="6" fill="#ff0000" />
<rect x="849" y="164" width="6" height="6" fill="#ff0000" />
<rect x="982" y="164" width="7" height="6" fill="#ff0000" />
<rect x="713" y="241" width="6" height="6" fill="#ff0000" />
<rect x="982" y="241" width="7" height="6" fill="#ff0000" />
<rect x="713" y="315" width="7" height="7" fill="#ff0000" />
<rect x="849" y="315" width="6" height="7" fill="#ff0000" />
<rect x="982" y="315" width="8" height="8" fill="#ff0000" />
<rect x="1258" y="84" width="20" height="611" fill="#eeeeee" />
<rect x="1261" y="101" width="16" height="577" fill="url(#chk)" />
<rect x="1261.5" y="85.5" width="15" height="15" rx="2" fill="url(#gBtn)" stroke="#9a9a9a"/>
<path d="M1264.5 95.25 H1273.5 L1269 90.25 Z" fill="#000"/>
<rect x="1261.5" y="126.5" width="15" height="354" rx="2" fill="url(#gBtn)" stroke="#9a9a9a"/>
<rect x="1261.5" y="647.5" width="15" height="14" rx="2" fill="url(#gBtn)" stroke="#9a9a9a"/>
<path d="M1264.5 656.75 H1273.5 L1269 651.75 Z" fill="#000"/>
<rect x="1261.5" y="662.5" width="15" height="15" rx="2" fill="url(#gBtn)" stroke="#9a9a9a"/>
<path d="M1264.5 667.25 H1273.5 L1269 672.25 Z" fill="#000"/>
<rect x="1278" y="82" width="2" height="614" fill="#8c8c8c" />
<rect x="2" y="678" width="1258" height="17" fill="#eeeeee" />
<rect x="19" y="678" width="1210" height="16" fill="url(#chk)" />
<rect x="3.5" y="678.5" width="15" height="15" rx="2" fill="url(#gBtn)" stroke="#9a9a9a"/>
<path d="M13.25 681.5 V690.5 L8.25 686 Z" fill="#000"/>
<rect x="98.5" y="678.5" width="1078" height="15" rx="2" fill="url(#gBtn)" stroke="#9a9a9a"/>
<rect x="1229.5" y="678.5" width="15" height="15" rx="2" fill="url(#gBtn)" stroke="#9a9a9a"/>
<path d="M1239.25 681.5 V690.5 L1234.25 686 Z" fill="#000"/>
<rect x="1245.5" y="678.5" width="15" height="15" rx="2" fill="url(#gBtn)" stroke="#9a9a9a"/>
<path d="M1250.75 681.5 V690.5 L1255.75 686 Z" fill="#000"/>
<rect x="0" y="695" width="1280" height="1" fill="#9c9c9c" />
<rect x="0" y="696" width="1280" height="1" fill="#fafafa" />
<rect x="0" y="695" width="2" height="28" fill="#8c8c8c" />
<rect x="1278" y="695" width="2" height="28" fill="#8c8c8c" />
<path d="M631 686 H647" stroke="#a8a8a8" stroke-width="1.5" stroke-dasharray="2 2"/>
<rect x="2.5" y="698.5" width="1272" height="23.5" fill="none" stroke="#c4c4c4"/>
<rect x="4.5" y="700.5" width="46" height="19" rx="2" fill="url(#gBtn)" stroke="#9a9a9a"/>
<rect x="34" y="701" width="1" height="18" fill="#a0a0a0" />
<path d="M38.5 708.0 H46.5 L42.5 712.5 Z" fill="#000"/>
<text x="9" y="714" font-family="Liberation Sans" font-size="11" font-weight="400" fill="#333" >pt</text>
<rect x="52.5" y="700.5" width="64" height="19" rx="2" fill="#fff" stroke="#a0a0a0"/>
<rect x="101.5" y="700.5" width="15" height="9" rx="2" fill="url(#gBtn)" stroke="#9a9a9a"/>
<rect x="101.5" y="710.5" width="15" height="9" rx="2" fill="url(#gBtn)" stroke="#9a9a9a"/>
<path d="M105.5 706.75 H112.5 L109 702.75 Z" fill="#000"/>
<path d="M105.5 713.25 H112.5 L109 717.25 Z" fill="#000"/>
<text x="55" y="714" font-family="Liberation Sans" font-size="11" font-weight="400" fill="#222" textLength="39" lengthAdjust="spacingAndGlyphs" >100.00 %</text>
<circle cx="126" cy="707" r="5.5" fill="#e8eef4" stroke="#909aa4" stroke-width="1.5"/>
<path d="M130 711 L135 716" stroke="#d89040" stroke-width="2.5"/>
<rect x="120" y="713" width="5" height="3" fill="#40b040" />
<circle cx="173" cy="707" r="5.5" fill="#e8eef4" stroke="#909aa4" stroke-width="1.5"/>
<path d="M177 711 L182 716" stroke="#d89040" stroke-width="2.5"/>
<path d="M167 714.5 H174 M170.5 711 V718" stroke="#40b040" stroke-width="2"/>
<text x="142" y="715" font-family="Liberation Sans" font-size="12.5" font-weight="400" fill="#000" textLength="18" lengthAdjust="spacingAndGlyphs" >1:1</text>
<rect x="192" y="706.5" width="1.6" height="7.5" fill="#222" />
<path d="M201 706.5 V714 L194 710.25 Z" fill="#222"/>
<path d="M224 706.5 V714 L216.5 710.25 Z" fill="#222"/>
<rect x="232.5" y="700.5" width="80" height="19" rx="2" fill="#fff" stroke="#a0a0a0"/>
<rect x="296.5" y="700.5" width="16" height="19" rx="2" fill="url(#gBtn)" stroke="#9a9a9a"/>
<path d="M300.5 708.0 H308.5 L304.5 712.5 Z" fill="#000"/>
<text x="264" y="714" font-family="Liberation Sans" font-size="11" font-weight="400" fill="#222" text-anchor="middle" >2 of 2</text>
<path d="M320.5 706.5 V714 L327.5 710.25 Z" fill="#888"/>
<path d="M343.5 706.5 V714 L350.5 710.25 Z" fill="#888"/><rect x="351" y="706.5" width="1.5" height="7.5" fill="#888"/>
<rect x="359.5" y="700.5" width="77" height="19" rx="2" fill="url(#gBtn)" stroke="#9a9a9a"/>
<rect x="421" y="701" width="1" height="18" fill="#a0a0a0" />
<path d="M425 708.0 H433 L429 712.5 Z" fill="#000"/>
<text x="364" y="714" font-family="Liberation Sans" font-size="11" font-weight="400" fill="#222" textLength="46" lengthAdjust="spacingAndGlyphs" >Background</text>
<rect x="0" y="723" width="1280" height="1" fill="#b4b4b4" />
<rect x="3.5" y="727.5" width="808" height="24" fill="none" stroke="#c4c4c4"/>
<rect x="815.5" y="728.5" width="99" height="22" rx="2" fill="#fff" stroke="#9a9a9a"/>
<rect x="817" y="731" width="3" height="17" rx="1.5" fill="#2a50b8"/>
<rect x="918.5" y="727.5" width="39" height="24" fill="none" stroke="#c4c4c4"/>
<text x="919" y="744" font-family="Liberation Sans" font-size="11" font-weight="400" fill="#000" textLength="37" lengthAdjust="spacingAndGlyphs" >X-Pos:</text>
<rect x="960.5" y="727.5" width="135" height="24" fill="none" stroke="#c4c4c4"/>
<text x="961" y="744" font-family="Liberation Sans" font-size="11" font-weight="400" fill="#000" textLength="54" lengthAdjust="spacingAndGlyphs" >134.72 pt</text>
<rect x="1098.5" y="727.5" width="38" height="24" fill="none" stroke="#c4c4c4"/>
<text x="1099" y="744" font-family="Liberation Sans" font-size="11" font-weight="400" fill="#000" textLength="36" lengthAdjust="spacingAndGlyphs" >Y-Pos:</text>
<rect x="1139.5" y="727.5" width="136" height="24" fill="none" stroke="#c4c4c4"/>
<text x="1140" y="744" font-family="Liberation Sans" font-size="11" font-weight="400" fill="#000" textLength="54" lengthAdjust="spacingAndGlyphs" >399.00 pt</text>
<rect x="0" y="752" width="1280" height="48" fill="url(#gTask)" />
<rect x="0" y="752" width="1280" height="1" fill="#f2f2f2" />
<rect x="0" y="753" width="1280" height="2" fill="#c6c6c6" />
<rect x="0" y="799" width="1280" height="1" fill="#b4b4b4" />
<path d="M0.5 760 H7.5 L4 756 Z" fill="#000"/>
<path d="M87.5 760 H94.5 L91 756 Z" fill="#000"/>
<path d="M141.5 760 H148.5 L145 756 Z" fill="#000"/>
<path d="M185.5 760 H192.5 L189 756 Z" fill="#000"/>
<path d="M1221.5 760 H1228.5 L1225 756 Z" fill="#000"/>
<defs><linearGradient id="gKde" x1="0" y1="0" x2="1" y2="1"><stop offset="0" stop-color="#a8d4fa"/><stop offset="0.45" stop-color="#4a90e4"/><stop offset="1" stop-color="#3a66c8"/></linearGradient></defs>
<rect x="6.5" y="761.5" width="31" height="31" rx="3" fill="url(#gKde)" stroke="#1a50b0" stroke-width="1.2"/>
<path d="M17.36 771.94 A7.4 7.4 0 1 0 27.66 782.24" fill="none" stroke="#fff" stroke-width="2.6"/>
<rect x="13.11" y="769.51" width="3.4" height="3.4" transform="rotate(225 14.81 771.21)" fill="#fff"/><rect x="10.30" y="776.30" width="3.4" height="3.4" transform="rotate(180 12.00 778.00)" fill="#fff"/><rect x="13.11" y="783.09" width="3.4" height="3.4" transform="rotate(135 14.81 784.79)" fill="#fff"/><rect x="19.90" y="785.90" width="3.4" height="3.4" transform="rotate(90 21.60 787.60)" fill="#fff"/><rect x="26.69" y="783.09" width="3.4" height="3.4" transform="rotate(45 28.39 784.79)" fill="#fff"/>
<rect x="20" y="766" width="3.2" height="15.8" fill="#fff"/><path d="M22.5 775.5 L32.5 766 M24 773.5 L32.7 781.3" stroke="#fff" stroke-width="3.4"/>
<defs><linearGradient id="gKw" x1="0" y1="0" x2="1" y2="1"><stop offset="0" stop-color="#9ee0ff"/><stop offset="0.5" stop-color="#3a90f0"/><stop offset="1" stop-color="#0a50d0"/></linearGradient><radialGradient id="gGlobe" cx="0.6" cy="0.3" r="0.8"><stop offset="0" stop-color="#dfe8ff"/><stop offset="0.35" stop-color="#5a7cc8"/><stop offset="1" stop-color="#102a80"/></radialGradient></defs>
<path d="M50 780 L66 769 L81 781 L64 792 Z" fill="url(#gKw)" stroke="#1a5ad0" stroke-width="0.8"/>
<path d="M57 774 L66 769 L74 780 L64 786 Z" fill="#ececf4" stroke="#b8b8c8" stroke-width="0.5"/>
<path d="M66.5 778.5 L74.5 763.5" stroke="#f0a010" stroke-width="3.6"/><path d="M66 780 L67.5 776.5" stroke="#704020" stroke-width="1.2"/>
<ellipse cx="79" cy="774" rx="3" ry="2" fill="#d0d0d0" opacity="0.7"/>
<circle cx="109.5" cy="773.5" r="12.5" fill="url(#gGlobe)" stroke="#1a3a90" stroke-width="0.8"/>
<path d="M107 765 L114 763 L119 768 L117 776 L113 779 L111 772 L106 770 Z" fill="#e8eeff" opacity="0.85"/><path d="M99 770 L103 768 L104 775 L100 777 Z" fill="#c0d0f0" opacity="0.7"/>
<path d="M109.5 786 V791" stroke="#aaa" stroke-width="2"/><path d="M100 790.5 H119" stroke="#b8b8b8" stroke-width="2.5"/><rect x="106" y="789" width="7" height="3" fill="#c8c8c8"/>
<rect x="148" y="768" width="21" height="17" rx="1" fill="#d8dce0" stroke="#a0a0a0"/><rect x="151" y="771" width="15" height="11" fill="#90b0d8"/>
<rect x="169" y="764" width="11" height="26" fill="#d4d4d4" stroke="#a8a8a8"/><rect x="153" y="786" width="12" height="3" fill="#c8c8c8"/>
<rect x="192.5" y="763.5" width="31" height="23" rx="3" fill="#e8e8e8" stroke="#909090"/><rect x="195" y="766" width="26" height="17" fill="#111"/>
<path d="M198 770 L201 772 L198 774" stroke="#fff" fill="none"/><path d="M202 776 H207" stroke="#fff"/>
<path d="M201 788 Q208 792 215 788" fill="#ddd" stroke="#999"/>
<path d="M237 762 H243 L265 793 H259 Z" fill="#707070" stroke="#444" stroke-width="0.6"/><path d="M258 762 H264 L243 793 H237 Z" fill="#505050" stroke="#333" stroke-width="0.6"/><path d="M240 763 L261 792" stroke="#aaa" stroke-width="1"/>
<path d="M291 777 L306 765 L321 777 V792 H291 Z" fill="#d8c8a0" stroke="#908060"/><path d="M294 770 L316 766 L318 781 L297 785 Z" fill="#f0f4ff" stroke="#8090b0" stroke-width="0.7"/>
<circle cx="313" cy="787" r="6" fill="#2060d0"/>
<rect x="337" y="754" width="36" height="3" fill="#ffffff" />
<rect x="337" y="757" width="1" height="20" fill="#ffffff" />
<rect x="338" y="757" width="34" height="20" fill="#2a52c2" />
<rect x="372" y="757" width="1" height="20" fill="#4a4a40" />
<rect x="338" y="776" width="35" height="1" fill="#4a4a40" />
<rect x="337" y="778" width="36" height="22" fill="#c8c8c8" />
<circle cx="355" cy="766.5" r="7" fill="url(#gBall)"/><path d="M358 761 L354 771" stroke="#c8a040" stroke-width="1.1"/>
<text x="351.5" y="770" font-family="Liberation Sans" font-size="11" font-weight="400" fill="#000" >1</text>
<text x="351.5" y="793" font-family="Liberation Sans" font-size="12" font-weight="400" fill="#111" >2</text>
<rect x="369" y="780" width="3" height="6" fill="#ffffff" />
<text x="369.6" y="785" font-family="Liberation Sans" font-size="7" font-weight="400" fill="#333" >i</text>
<text x="425" y="770" font-family="Liberation Sans" font-size="12" font-weight="400" fill="url(#tf0)" textLength="105" lengthAdjust="spacingAndGlyphs" >scribus - Thunderbi</text>
<text x="559" y="770" font-family="Liberation Sans" font-size="12" font-weight="400" fill="url(#tf1)" textLength="110" lengthAdjust="spacingAndGlyphs" >maciej@pan: ~ - Po</text>
<text x="693" y="770" font-family="Liberation Sans" font-size="12" font-weight="400" fill="url(#tf2)" textLength="110.5" lengthAdjust="spacingAndGlyphs" >0003097: problems</text>
<text x="827" y="770" font-family="Liberation Sans" font-size="12" font-weight="700" fill="url(#tf3)" textLength="105.5" lengthAdjust="spacingAndGlyphs" >Scribus 1.3.3cvs</text>
<text x="425" y="793" font-family="Liberation Sans" font-size="12" font-weight="400" fill="url(#tf4)" textLength="106.5" lengthAdjust="spacingAndGlyphs" >amaroK - Track 11</text>
<text x="559" y="793" font-family="Liberation Sans" font-size="12" font-weight="400" fill="url(#tf5)" textLength="110" lengthAdjust="spacingAndGlyphs" >pl.comp.dtp 9222/9</text>
<text x="693" y="793" font-family="Liberation Sans" font-size="12" font-weight="400" fill="url(#tf6)" textLength="110.5" lengthAdjust="spacingAndGlyphs" >Java - Ch01_01.jav</text>
<text x="827" y="793" font-family="Liberation Sans" font-size="12" font-weight="400" fill="#000" textLength="43.5" lengthAdjust="spacingAndGlyphs" >gkrellm</text>
<defs><linearGradient id="tf0" gradientUnits="userSpaceOnUse" x1="498" y1="0" x2="532" y2="0"><stop offset="0" stop-color="#000"/><stop offset="1" stop-color="#e4e4e4"/></linearGradient><linearGradient id="tf1" gradientUnits="userSpaceOnUse" x1="637" y1="0" x2="671" y2="0"><stop offset="0" stop-color="#000"/><stop offset="1" stop-color="#e4e4e4"/></linearGradient><linearGradient id="tf2" gradientUnits="userSpaceOnUse" x1="771.5" y1="0" x2="805.5" y2="0"><stop offset="0" stop-color="#777"/><stop offset="1" stop-color="#e4e4e4"/></linearGradient><linearGradient id="tf3" gradientUnits="userSpaceOnUse" x1="900.5" y1="0" x2="934.5" y2="0"><stop offset="0" stop-color="#000"/><stop offset="1" stop-color="#e4e4e4"/></linearGradient><linearGradient id="tf4" gradientUnits="userSpaceOnUse" x1="499.5" y1="0" x2="533.5" y2="0"><stop offset="0" stop-color="#000"/><stop offset="1" stop-color="#e4e4e4"/></linearGradient><linearGradient id="tf5" gradientUnits="userSpaceOnUse" x1="637" y1="0" x2="671" y2="0"><stop offset="0" stop-color="#000"/><stop offset="1" stop-color="#e4e4e4"/></linearGradient><linearGradient id="tf6" gradientUnits="userSpaceOnUse" x1="771.5" y1="0" x2="805.5" y2="0"><stop offset="0" stop-color="#000"/><stop offset="1" stop-color="#e4e4e4"/></linearGradient></defs>
<path d="M407 762 L414 757 L421 762 V772 H407 Z" fill="#e0d0a8" stroke="#a08858" stroke-width="0.8"/><path d="M409 760 L418 759 L419 766 L410 767 Z" fill="#e8eeff" stroke="#8090b0" stroke-width="0.6"/><path d="M407 772 L414 766 L421 772" fill="#eadcb8" stroke="#a08858" stroke-width="0.6"/>
<rect x="540.5" y="757.5" width="15" height="12" rx="1.5" fill="#f4f4f4" stroke="#999"/><rect x="542" y="759" width="12" height="8" fill="#111"/><path d="M543 770.5 Q548 774 553 770.5" fill="#eee" stroke="#aaa" stroke-width="0.8"/>
<circle cx="682" cy="765" r="7" fill="#4070c0"/><circle cx="680" cy="763" r="3.5" fill="#a0c0f0" opacity="0.6"/>
<circle cx="815.5" cy="765.5" r="7.5" fill="url(#gBall)"/><path d="M819 759 L814 771" stroke="#d0a040" stroke-width="1.2"/>
<circle cx="414" cy="788" r="7.5" fill="#c8d4e4" stroke="#4a78b8" stroke-width="0.8"/><path d="M408 792 L412 784 L418 783 L417 789 L413 794 Z" fill="#2a5a98"/>
<path d="M542 784 L551 781 L555 790 L546 795 Z" fill="#e0e0e0" stroke="#777" stroke-width="0.8"/><path d="M543 787 L552 784 M544 790 L553 787" stroke="#999" stroke-width="0.7"/>
<circle cx="682" cy="788" r="7" fill="#3a2a90"/><circle cx="680" cy="786" r="4" fill="#c080d0" opacity="0.6"/><path d="M675 786.5 H689 M675 789.5 H689" stroke="#f0f0ff" stroke-width="1.1"/>
<rect x="808" y="781" width="16" height="16" fill="#304858" stroke="#222"/><path d="M812 795 L816 784 M818 786 L820 794" stroke="#ddd"/><circle cx="820" cy="788" r="1.2" fill="#40ff40"/>
<rect x="957.5" y="768.5" width="17" height="19" rx="2" fill="#f8e0a0" stroke="#c8a050"/><rect x="960" y="771" width="12" height="15" fill="#fff"/>
<text x="962" y="784" font-family="Liberation Sans" font-size="11" font-weight="400" fill="#888" >k</text>
<path d="M979 770 Q979 767 983 767 H986 Q989 767 989 770" fill="none" stroke="#666" stroke-width="1.5"/><ellipse cx="985" cy="778" rx="6.5" ry="5" fill="#8a98c8" stroke="#4a5888" stroke-width="0.8"/><path d="M980 782 L979 786 M987 782 L987 786" stroke="#d0a020" stroke-width="1.5"/>
<rect x="992.5" y="767.5" width="6.5" height="19" rx="1" fill="#f0f0f0" stroke="#444" stroke-width="0.9"/><rect x="993.5" y="769" width="4.5" height="16" fill="#1010f0"/>
<rect x="1002" y="770" width="20" height="4" fill="#111" />
<rect x="1002" y="774" width="20" height="5" fill="#c82020" />
<rect x="1002" y="779" width="20" height="4" fill="#d8c020" />
<rect x="1003" y="783" width="20" height="1" fill="#999" />
<text x="1005.5" y="781" font-family="Liberation Sans" font-size="10" font-weight="700" fill="#fff" textLength="13" lengthAdjust="spacingAndGlyphs" >de</text>
<defs><radialGradient id="gGreen" cx="0.5" cy="0.3" r="0.7"><stop offset="0" stop-color="#d8ffd0"/><stop offset="0.4" stop-color="#40c030"/><stop offset="1" stop-color="#108010"/></radialGradient></defs><circle cx="1037" cy="776.5" r="9.6" fill="url(#gGreen)" stroke="#205a30" stroke-width="0.8"/>
<path d="M1053 772 H1057 L1064 766 V788 L1057 782 H1053 Z" fill="#3aa0e0" stroke="#1a6aa0" stroke-width="0.8"/><ellipse cx="1065" cy="777" rx="4.5" ry="9.5" fill="#58b0e8" stroke="#1a6aa0" stroke-width="0.8"/><ellipse cx="1065.5" cy="777" rx="2.6" ry="6" fill="#d8d8d8" stroke="#777" stroke-width="0.6"/>
<circle cx="1086" cy="777" r="10" fill="#5a88d0" stroke="#2a4a90" stroke-width="0.8"/><path d="M1080 786 L1084 776 L1090 770 L1093 772 L1092 778 L1087 784 Z" fill="#1a3a80"/><path d="M1075 781 L1083 783 L1076 788 Z" fill="#c8d0d8" stroke="#667" stroke-width="0.6"/>
<text x="1099" y="775" font-family="Liberation Sans" font-size="10.5" font-weight="700" fill="#000" >86</text>
<rect x="1101.5" y="783.5" width="4" height="5" fill="#50c020" stroke="#222" stroke-width="0.8"/>
<rect x="1106.5" y="779.5" width="4" height="9" fill="#50c020" stroke="#222" stroke-width="0.8"/>
<rect x="1111.5" y="774.5" width="4" height="14" fill="#50c020" stroke="#222" stroke-width="0.8"/>
<rect x="1117.5" y="769.5" width="4" height="19" fill="#50c020" stroke="#222" stroke-width="0.8"/>
<text x="1148.5" y="775" font-family="Liberation Sans" font-size="16.5" font-weight="700" fill="#000" textLength="47.5" lengthAdjust="spacingAndGlyphs" >18:09</text>
<text x="1138" y="796.5" font-family="Liberation Sans" font-size="12" font-weight="400" fill="#000" textLength="70" lengthAdjust="spacingAndGlyphs" >2006-03-15</text>
<defs><linearGradient id="gTrash" x1="0" y1="0" x2="1" y2="0"><stop offset="0" stop-color="#9ad4ff"/><stop offset="0.5" stop-color="#4aa0f0"/><stop offset="1" stop-color="#2a78e0"/></linearGradient></defs>
<path d="M1233.5 766 V788 Q1244.5 796 1255.5 788 V766 Z" fill="url(#gTrash)" stroke="#2a60b0" stroke-width="0.9"/><ellipse cx="1244.5" cy="766" rx="11" ry="4.2" fill="#b8e0ff" stroke="#2a60b0" stroke-width="0.9"/><path d="M1234 788 Q1244.5 795 1255 788 V786 Q1244.5 780 1234 786 Z" fill="#e8f0ff" opacity="0.8"/>
<rect x="1266" y="753" width="14" height="46" fill="#f0f0f0" />
<rect x="1266" y="753" width="1" height="46" fill="#d8d8d8" />
<path d="M1271.5 776 V784 L1275.5 780 Z" fill="#555"/></svg></body></html>
